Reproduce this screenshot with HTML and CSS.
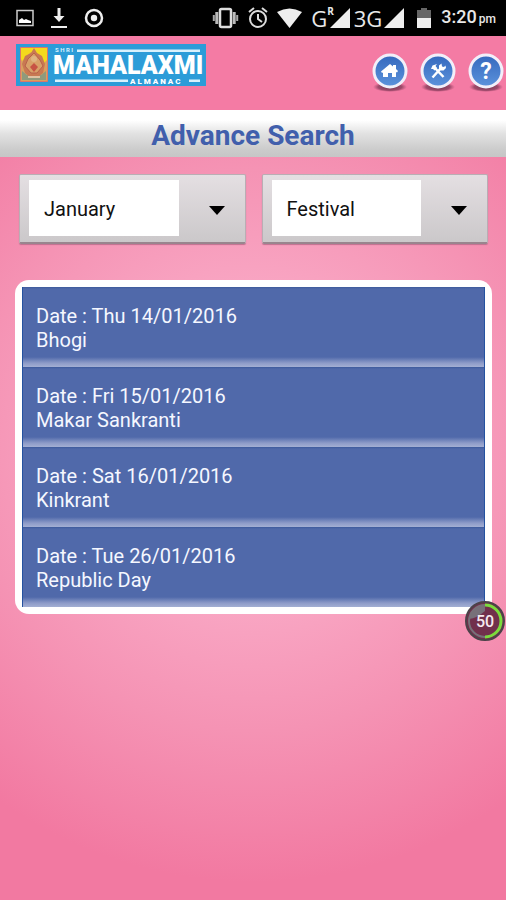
FILE: index.html
```html
<!DOCTYPE html>
<html lang="en">
<head>
<meta charset="utf-8">
<meta name="viewport" content="width=device-width, initial-scale=1">
<title>Advance Search</title>
<link rel="stylesheet" href="styles.css">
</head>
<body>
<div class="status">
  <div class="notices">
    <svg width="18" height="18" viewBox="0 0 18 18"><path d="M1 1.500h16v15H1z" fill="none" stroke="#ccc" stroke-width="1.500"/><path d="M3 14v-3l3-2 2 2 2-1 2 1 3 1v2z" fill="#fff"/></svg>
    <svg width="16" height="22" viewBox="0 0 16 22"><path d="M6.500 1h3v8h4L8 15 2.500 9h4z" fill="#eee"/><path d="M0 19h16v2H0z" fill="#eee"/></svg>
    <svg width="20" height="20" viewBox="0 0 20 20"><circle cx="10" cy="10" r="8" fill="none" stroke="#eee" stroke-width="2.500"/><circle cx="10" cy="10" r="3.200" fill="#eee"/></svg>
  </div>
  <div class="signals">
    <svg width="27" height="22" viewBox="0 0 27 22"><rect x="8" y="2" width="11" height="18" rx="1.500" fill="none" stroke="#ddd" stroke-width="2.500"/><path d="M4.800 5v12M22.200 5v12" stroke="#bbb" stroke-width="3"/><path d="M1.800 8v6M25.200 8v6" stroke="#aaa" stroke-width="2"/></svg>
    <svg width="20" height="22" viewBox="0 0 20 22"><circle cx="10" cy="12" r="8" fill="none" stroke="#ddd" stroke-width="2"/><path d="M1 5l5-4M19 5l-5-4M10 7v5l4 3" fill="none" stroke="#ddd" stroke-width="2"/></svg>
    <svg width="25" height="20" viewBox="0 0 25 20"><path d="M0 4Q12.500-3 25 4L12.500 20z" fill="#eee"/></svg>
    <div class="net net-g"><span>G</span><sup>R</sup><svg width="20" height="20" viewBox="0 0 20 20"><path d="M20 0v20H0z" fill="#eee"/></svg></div>
    <div class="net"><span>3G</span><svg width="20" height="20" viewBox="0 0 20 20"><path d="M20 0v20H0z" fill="#eee"/></svg></div>
    <svg class="battery" width="14" height="20" viewBox="0 0 14 20"><path d="M0 2h4V0h6v2h4v9H0z" fill="#666"/><path d="M0 10h14v10H0z" fill="#eee"/></svg>
    <time class="clock">3:20<small>pm</small></time>
  </div>
</div>

<header class="header">
  <svg class="logo" width="190" height="42" viewBox="0 0 190 42" role="img" aria-label="Shri Mahalaxmi Almanac">
    <path d="M0 0h190v42H0z" fill="#2c9cd8"/>
    <path d="M4.500 3.500h27v34h-27z" fill="#d9a05e" stroke="#d9776b"/>
    <path d="M5 4h26v12l-4 4-12-12L6 17l-1-2z" fill="#f4d91c"/>
    <path d="M6 36v-9l5 4h14l5-4v9z" fill="#8f9a7c"/>
    <path d="M18 4l3 5 5 3 3 8-2 9-5 4h-8l-5-4-3-9 3-8 6-3z" fill="#c87952"/>
    <path d="M18 9l6 7 3 6-6 7h-6l-6-7 3-7z" fill="#d8a068" stroke="#b9604a"/>
    <circle cx="18" cy="15" r="3" fill="#dfb582"/><path d="M14 23l4-4 4 4-4 5z" fill="#c75344"/><path d="M12 33h12" stroke="#dfc2a2" stroke-width="2"/>
    <path d="M61 5.500h123v2.500H61zM39 35.500h73v2.500H39zM173 35.500h11v2.500h-11z" fill="#d9f1fc"/>
    <text class="logo-small" x="39" y="8">S H R I</text>
    <text class="logo-name" x="37" y="30">MAHALAXMI</text>
    <text class="logo-sub" x="114" y="40">A L M A N A C</text>
  </svg>
  <nav class="actions">
    <button type="button" aria-label="Home"><svg width="36" height="44" viewBox="0 0 36 44"><use href="#disc"/><path d="M18 12l3 2.500V13h3v4l2 2-1 1.500-1-.5v5h-4v-4h-4v4h-5v-4.500l-1 .5-1-1.500z" fill="#fff"/></svg></button>
    <button type="button" aria-label="Tools"><svg width="36" height="44" viewBox="0 0 36 44"><use href="#disc"/><path d="M14 15l9.500 10M12.500 25.500l9-10" fill="none" stroke="#fff" stroke-width="2.500"/><path d="M11 17l1.500-3.500L17 12l-1.500 2 1.500 2-2.500 2.500-1.500-1.500zM19 16.500v-3l2.500-2 .5 3 2 .5 1.500-1.500.5 2.500-2.500 2.500h-3z" fill="#fff"/></svg></button>
    <button type="button" aria-label="Help"><svg width="36" height="44" viewBox="0 0 36 44"><defs><linearGradient id="blue" x2="0" y2="1"><stop stop-color="#3568bd"/><stop offset="1" stop-color="#5c93dc"/></linearGradient><radialGradient id="shade"><stop stop-color="#70354f"/><stop offset=".7" stop-color="#8a3f5e" stop-opacity=".8"/><stop offset="1" stop-color="#a34a6c" stop-opacity="0"/></radialGradient><g id="disc"><ellipse cx="18" cy="35" rx="17" ry="5" fill="url(#shade)"/><circle cx="18" cy="19" r="16" fill="url(#blue)" stroke="#f2eff9" stroke-width="3"/></g></defs><use href="#disc"/><text class="question" x="18" y="27" text-anchor="middle">?</text></svg></button>
  </nav>
</header>

<h1 class="title">Advance Search</h1>

<main class="content">
  <form class="filters">
    <div class="picker"><select aria-label="Month"><option>January</option></select></div>
    <div class="picker"><select aria-label="Type"><option>Festival</option></select></div>
  </form>
  <div class="results">
    <ul class="list">
      <li>Date : Thu 14/01/2016<br>Bhogi</li>
      <li>Date : Fri 15/01/2016<br>Makar Sankranti</li>
      <li>Date : Sat 16/01/2016<br>Kinkrant</li>
      <li>Date : Tue 26/01/2016<br>Republic Day</li>
    </ul>
    <div class="meter">
      <svg width="40" height="40" viewBox="0 0 40 40"><circle cx="20" cy="20" r="19" fill="#71304c" stroke="#4c4249" stroke-width="2"/><path d="M4 18A16 16 0 0 1 20 4v6Q12 17 4 18z" fill="#777079"/><circle cx="20" cy="20" r="16" fill="none" stroke="#777078" stroke-width="2"/><path d="M20 4a16 16 0 0 1 0 32" fill="none" stroke="#7bdc3c" stroke-width="3"/></svg>
      <span>50</span>
    </div>
  </div>
</main>
</body>
</html>
```
FILE: styles.css
```css
* { box-sizing: border-box; }

body {
  margin: 0;
  min-height: 100vh;
  font-family: Roboto, "Liberation Sans", sans-serif;
  background: #f279a1 radial-gradient(ellipse 86% 48% at 50% 50%, #fbaeca 0%, #f9a7c4 35%, #f593b4 65%, #f279a1 100%);
}

svg { display: block; flex: none; }

.status {
  display: flex;
  justify-content: space-between;
  align-items: center;
  height: 36px;
  padding: 0 10px 0 16px;
  background: #000;
  color: #e8e8e8;
}

.notices { display: flex; align-items: center; gap: 17px; }
.signals { display: flex; align-items: center; gap: 9px; }

.net {
  display: flex;
  align-items: center;
  gap: 2px;
  margin-right: -5px;
  font: 500 22px/24px "Open Sans", sans-serif;
}

.net-g { gap: 0; }
.net sup { align-self: flex-start; font-size: 10px; line-height: 10px; font-weight: 700; }
.net-g svg { margin-left: -4px; }
.battery { margin-left: 9px; }
.clock { margin-left: 1px; font-size: 18px; line-height: 24px; font-weight: 500; white-space: nowrap; }
.clock small { margin-left: 2px; font-size: 12px; }

.header {
  display: flex;
  justify-content: space-between;
  align-items: flex-start;
  height: 74px;
  padding: 8px 2px 0 16px;
  background: #f47ba4;
}

.logo-name { font: 900 25px Roboto, sans-serif; fill: #fff; }
.logo-small { font: 700 6px Roboto, sans-serif; fill: #d9f1fc; }
.logo-sub { font: 900 8px Roboto, sans-serif; fill: #fff; }
.question { font: 700 23px Roboto, sans-serif; fill: #fff; }

.actions { display: flex; gap: 12px; padding-top: 8px; }
.actions button { padding: 0; border: 0; background: none; }

.title {
  margin: 0;
  height: 47px;
  font-size: 28px;
  line-height: 51px;
  font-weight: 700;
  text-align: center;
  color: #415fac;
  background: linear-gradient(#fff 0%, #fff 22%, #e2e2e2 50%, #cbcbcb 85%, #c6c6c6 100%);
}

.content { padding: 17px 14px 17px 15px; }

.filters { display: flex; gap: 16px; padding: 0 4px; }

.picker { position: relative; flex: 1; }

.picker::after {
  content: "";
  position: absolute;
  top: 32px;
  right: 21px;
  border: 8px solid transparent;
  border-top: 9px solid #000;
  border-bottom: 0;
  pointer-events: none;
}

.picker select {
  display: block;
  width: 100%;
  height: 70px;
  padding: 0 70px 0 24px;
  appearance: none;
  border: 1px solid #b9aeb4;
  border-bottom: 2px solid #99858e;
  border-radius: 2px;
  background:
    linear-gradient(#fff, #fff) 9px 5px / calc(100% - 75px) 56px no-repeat,
    linear-gradient(#e4dfe2, #cbc8ca);
  box-shadow: 0 1px 1px #c0708f;
  font: 20px Roboto, sans-serif;
  color: #111;
}

.results {
  position: relative;
  margin-top: 36px;
  padding: 7px;
  border-radius: 14px;
  background: #fff;
}

.list { margin: 0; padding: 0; list-style: none; }

.list li {
  height: 80px;
  padding: 17px 13px 0;
  border: solid #2452a0;
  border-width: 0 1px;
  background: linear-gradient(#3d5a9c 0, #5069aa 2px, #5069aa 70px, #8d9bc8 76px, #a3afd3 100%);
  color: #f5f7ff;
  font-size: 20px;
  line-height: 24px;
}

.meter {
  position: absolute;
  right: -13px;
  bottom: -27px;
  display: grid;
  place-items: center;
  color: #f5e9ef;
  font-size: 16px;
  font-weight: 500;
}

.meter > * { grid-area: 1 / 1; }
```
